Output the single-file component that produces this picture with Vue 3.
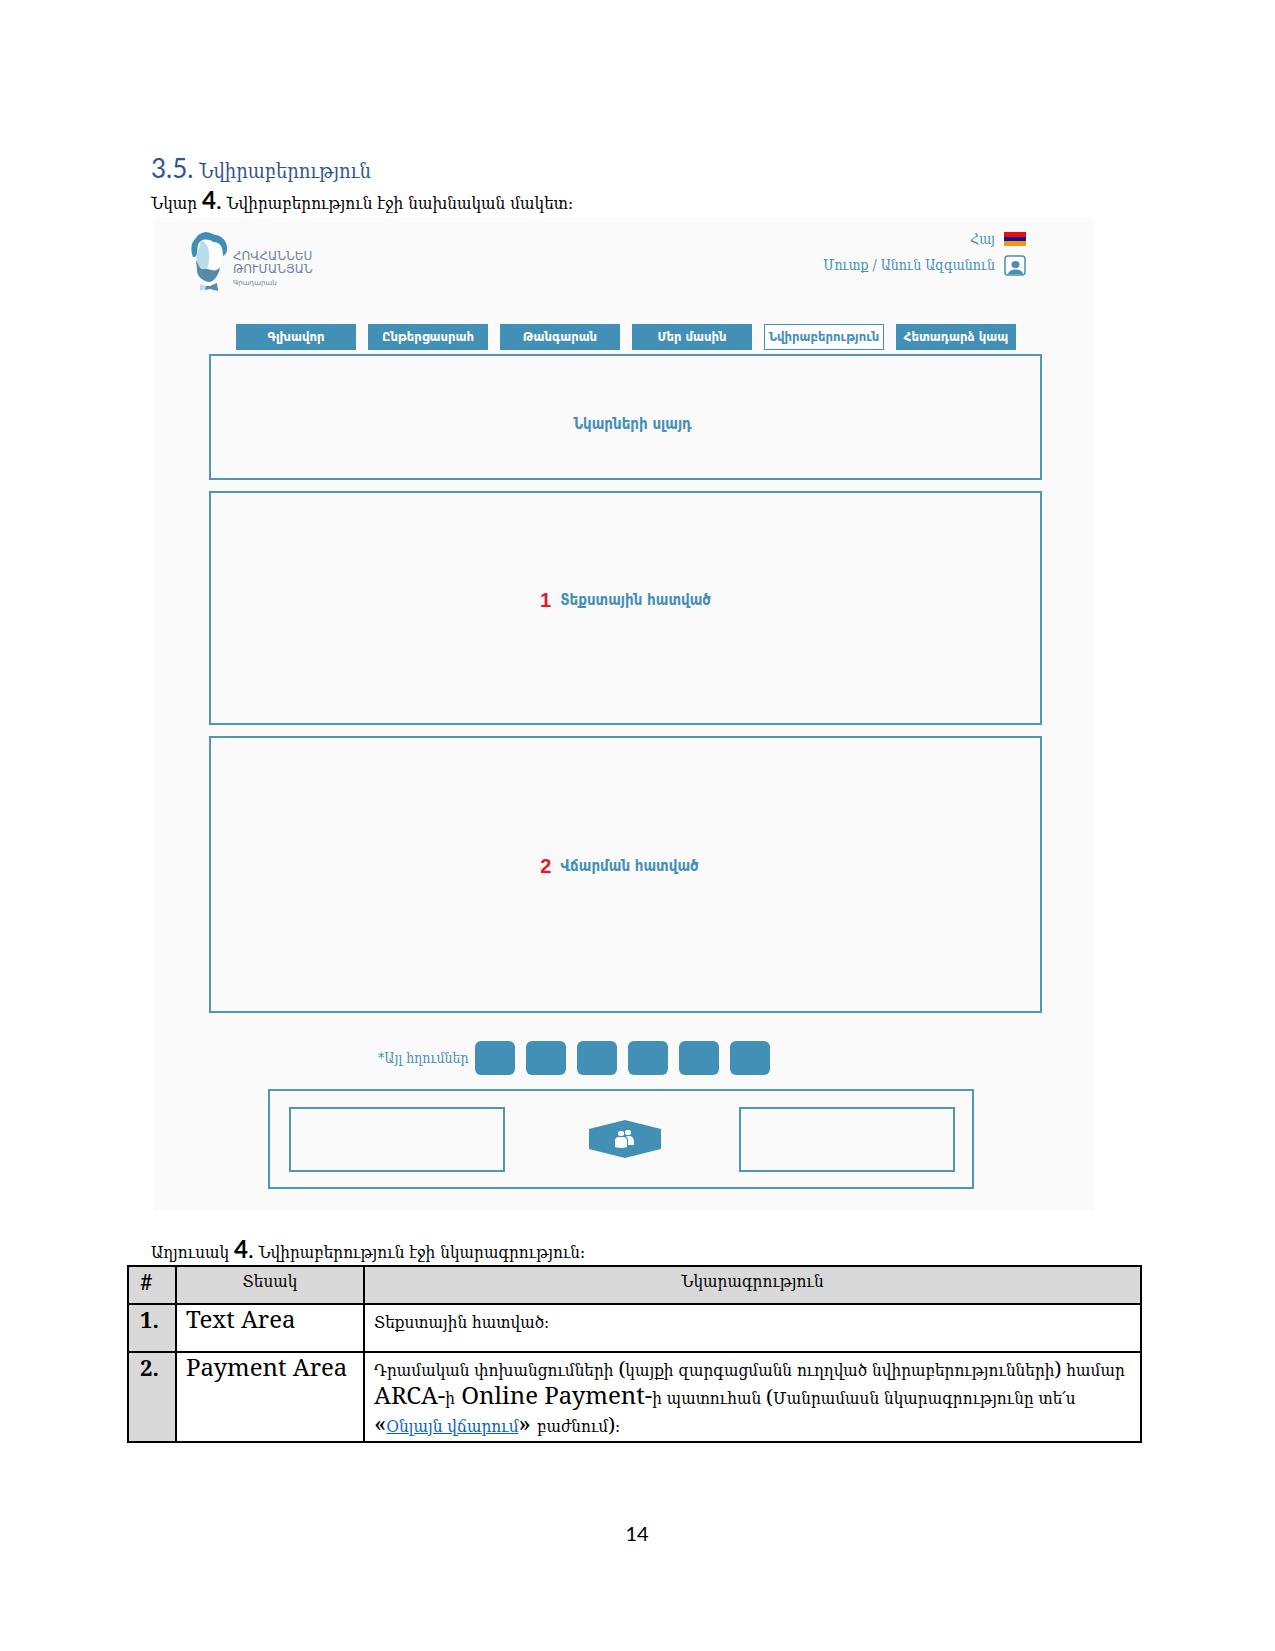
<script setup>
const nav = [
  { label: 'Գլխավոր' },
  { label: 'Ընթերցասրահ' },
  { label: 'Թանգարան' },
  { label: 'Մեր մասին' },
  { label: 'Նվիրաբերություն', active: true },
  { label: 'Հետադարձ կապ' },
]
const links = 6
</script>

<template>
  <main class="page">
    <h1 class="heading"><span class="heading-num">3.5.</span> Նվիրաբերություն</h1>
    <p class="caption">Նկար <b>4</b><span class="dot">.</span> Նվիրաբերություն էջի նախնական մակետ։</p>

    <section class="mock">
      <header class="top">
        <div class="logo">
          <svg class="face" viewBox="0 0 37 60" aria-hidden="true">
            <path d="M8 10 C12 6 20 8 24 10 C31 9 32 16 31 22 L28 37 L18 40 L7 34 L5 25Z" fill="#fff" />
            <path d="M10 9 C16 9 19 18 18 28 C18 34 15 37 16 38 L7 35 L5 25Z" fill="#b9dceb" />
            <path d="M2 25 C-1 18 0 10 5 6 C7 2 11 1 14 0 C20 0 22 3 25 3 C32 4 37 11 36 18 C36 21 34 23 32 24 C32 16 30 10 22 10 C17 6 9 7 7 13 C6 17 7 20 5 24 C4 25 3 25 2 25Z" fill="#3f8fb5" />
            <path d="M5 28 L9 36 C12 38 17 36 20 38 C24 39 27 38 29 35 C28 43 23 50 18 50 C12 49 6 45 6 38Z" fill="#548ba5" />
            <path d="M9 52 L17 55 L17 56 L9 59Z" fill="#b9dceb" />
            <path d="M15 54 L19 54 L26 51 L27 59 L19 57 L14 58Z" fill="#548ba5" />
          </svg>
          <div class="logo-text">
            <span>ՀՈՎՀԱՆՆԵՍ</span>
            <span>ԹՈՒՄԱՆՅԱՆ</span>
            <small>Գրադարան</small>
          </div>
        </div>
        <div class="user">
          <a class="user-row" href="#lang">Հայ
            <svg width="22" height="14" viewBox="0 0 22 14" aria-hidden="true">
              <rect width="22" height="5" fill="#e80c0c" />
              <rect y="5" width="22" height="4" fill="#10109a" />
              <rect y="9" width="22" height="5" fill="#f7950f" />
            </svg>
          </a>
          <a class="user-row" href="#login">Մուտք / Անուն Ազգանուն
            <svg width="22" height="21" viewBox="0 0 22 21" aria-hidden="true">
              <rect x="1" y="1" width="20" height="19" rx="3" fill="#fff" stroke="#4590b4" stroke-width="1.5" />
              <ellipse cx="11.500" cy="9.500" rx="4" ry="3.500" fill="#4590b4" />
              <path d="M4 19 C5 13 18 13 19 19Z" fill="#4590b4" />
            </svg>
          </a>
        </div>
      </header>

      <nav class="nav">
        <button v-for="n in nav" :key="n.label" type="button" :class="{ active: n.active }">{{ n.label }}</button>
      </nav>

      <div class="blocks">
        <div class="block slide">Նկարների սլայդ</div>
        <div class="block text"><b>1</b>Տեքստային հատված</div>
        <div class="block pay"><b>2</b>Վճարման հատված</div>
      </div>

      <div class="links">
        <span>*Այլ հղումներ</span>
        <i v-for="n in links" :key="n"></i>
      </div>

      <footer class="foot">
        <div class="foot-box"></div>
        <svg class="hex" viewBox="0 0 72 38" aria-hidden="true">
          <path d="M36 0 L72 9 V29 L36 38 L0 29 V9Z" fill="#4290b5" />
          <g fill="#fff">
            <rect x="29" y="11" width="6" height="5" rx="2" />
            <rect x="36" y="10" width="6" height="5" rx="2" />
            <path d="M26 27 V21 Q26 17 30 17 H34 Q38 17 38 21 V27Q32 29 26 27Z" />
            <path d="M37 16 H41 Q45 17 45 22 V25 H39 V20 Q39 18 37 16Z" />
          </g>
        </svg>
        <div class="foot-box"></div>
      </footer>
    </section>

    <p class="caption second">Աղյուսակ <b>4</b><span class="dot">.</span> Նվիրաբերություն էջի նկարագրություն։</p>
    <table class="spec">
      <thead>
        <tr><th class="c1">#</th><th class="c2 mid">Տեսակ</th><th class="mid">Նկարագրություն</th></tr>
      </thead>
      <tbody>
        <tr class="short">
          <th>1.</th>
          <td>Text Area</td>
          <td><span class="hy">Տեքստային հատված։</span></td>
        </tr>
        <tr>
          <th>2.</th>
          <td>Payment Area</td>
          <td>
            <span class="hy">Դրամական փոխանցումների <big>(</big>կայքի զարգացմանն ուղղված նվիրաբերությունների<big>)</big> համար</span><br />
            ARCA-<span class="hy">ի</span> Online Payment-<span class="hy">ի պատուհան <big>(</big>Մանրամասն նկարագրությունը տե՛ս</span><br />
            «<a class="hy" href="#payment">Օնլայն վճարում</a>» <span class="hy">բաժնում<big>)</big>։</span>
          </td>
        </tr>
      </tbody>
    </table>
    <p class="num">14</p>
  </main>
</template>

<style>
body { margin: 0; background: #fff; }
</style>

<style scoped>
* { box-sizing: border-box; }
.page {
  padding: 151px 133px 96px 127px;
  font-family: "DejaVu Serif Condensed", "DejaVu Serif", serif;
  color: #000;
}
.heading {
  margin: 0 0 0 24px;
  font-size: 20px;
  line-height: 34px;
  font-weight: 400;
  color: #2f5496;
}
.heading-num { font: 26px/34px Lato, sans-serif; }
.caption { margin: 0 0 0 24px; font-size: 17px; line-height: 30px; white-space: nowrap; }
.caption b { font: bold 24px/24px Lato, sans-serif; }
.dot { font: 24px/24px Lato, sans-serif; }
.second { margin-top: 26px; line-height: 26px; }

.mock { margin: 0 47px 0 26px; padding: 14px 53px 22px 56px; background: #fafafa; }
.top { display: flex; justify-content: space-between; height: 92px; padding: 0 16px 0 0; }
.logo { display: flex; gap: 5px; margin-left: -18px; }
.face { width: 37px; height: 60px; }
.logo-text { display: flex; flex-direction: column; padding-top: 18px; font: 12px/13px "DejaVu Sans", sans-serif; color: #71869a; }
.logo-text small { font-size: 7px; line-height: 14px; }
.user { display: flex; flex-direction: column; align-items: flex-end; }
.user-row { display: flex; align-items: center; gap: 9px; height: 14px; font-size: 14px; color: #4590b4; text-decoration: none; }
.user-row + .user-row { height: 38px; }

.nav { display: grid; grid-template-columns: repeat(6, 1fr); gap: 12px; margin: 0 26px 4px 27px; }
.nav button {
  height: 26px; padding: 0; border: 1px solid #4290b5; background: #4290b5; color: #fff;
  font: bold 13px/24px "DejaVu Sans Condensed", "DejaVu Sans", sans-serif; white-space: nowrap;
}
.nav button.active { background: #fff; color: #4590b4; }
.blocks { display: flex; flex-direction: column; gap: 11px; }
.block {
  display: flex; align-items: center; justify-content: center; gap: 9px;
  border: 2px solid #5097b7; color: #4590b4;
  font: bold 15px/20px "DejaVu Sans Condensed", "DejaVu Sans", sans-serif;
}
.block b { font: bold 20px/20px "Liberation Sans", sans-serif; color: #e5182a; }
.slide { height: 126px; padding: 14px 0 0 14px; }
.text { height: 234px; padding-bottom: 16px; }
.pay { height: 277px; padding-bottom: 18px; padding-right: 12px; }
.links { display: flex; align-items: center; gap: 11px; margin: 28px 0 14px 169px; color: #4590b4; font-size: 14px; }
.links span { margin-right: -5px; white-space: nowrap; }
.links i { width: 40px; height: 34px; border-radius: 6px; background: #4290b5; }
.foot {
  display: flex; align-items: center; justify-content: space-between;
  height: 100px; margin: 0 68px 0 59px; padding: 0 17px 0 19px; border: 2px solid #5097b7;
}
.foot-box { width: 216px; height: 65px; border: 2px solid #5097b7; }
.hex { width: 72px; height: 38px; margin-left: 6px; }

.spec { width: 100%; border-collapse: collapse; font: 24px/28px "Noto Serif", "Liberation Serif", serif; }
.spec th, .spec td { border: 2px solid #000; padding: 0 9px 4px; text-align: left; vertical-align: top; }
.spec th { background: #d9d9d9; padding-left: 11px; font-size: 22px; }
.spec thead th { height: 38px; }
.spec thead th.mid {
  padding: 0; text-align: center;
  font: 17px/28px "DejaVu Serif Condensed", "DejaVu Serif", serif;
}
.c1 { width: 48px; }
.c2 { width: 188px; }
.short td { height: 48px; }
.spec .hy { font-family: "DejaVu Serif Condensed", "DejaVu Serif", serif; font-size: 17px; line-height: 17px; }
.spec big { font: 20px/17px "Noto Serif", "Liberation Serif", serif; }
.spec a { color: #0563c1; }
.num { margin: 76px 0 0 5px; text-align: center; font: 20px/28px Lato, sans-serif; }
</style>
